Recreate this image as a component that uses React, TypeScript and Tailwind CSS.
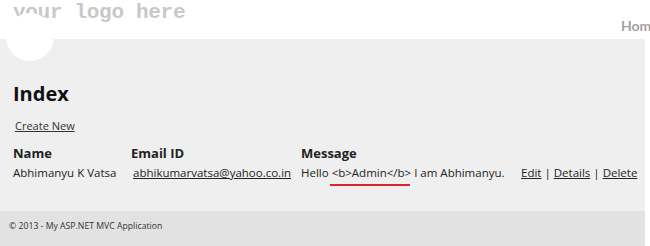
import React from 'react';

const rows = [
  {
    name: 'Abhimanyu K Vatsa',
    email: 'abhikumarvatsa@yahoo.co.in',
    message: 'Hello <b>Admin</b> I am Abhimanyu.',
  },
];

const App = () => {
  return (
    <div className="w-[650px] h-[246px] bg-white overflow-hidden relative font-['Open_Sans',sans-serif]">
      {/* Header */}
      <header className="h-[39px] flex items-start">
        <div className="pl-[13px] pt-[1px] text-[21px] leading-[24px] font-bold text-[#c8c8c8] font-['Liberation_Mono',monospace] tracking-[-0.3px] whitespace-nowrap">
          your logo here
        </div>
        <nav className="ml-auto shrink-0 w-[29px] pt-[17px] text-[14px] leading-[18px] font-bold text-[#a2a2a2] whitespace-nowrap font-['Lato',sans-serif]">
          Home
        </nav>
      </header>

      {/* Logo circle */}
      <div className="absolute left-[6px] top-[13px] w-[48px] h-[48px] rounded-full bg-white z-10" />

      {/* Body */}
      <main className="w-[645px] bg-[#efefef] h-[172px] pl-[13px] pt-[45px]">
        <h2 className="text-[20px] leading-[20px] font-bold text-[#111]">Index</h2>
        <p className="mt-[15px] ml-[2px] text-[11px] leading-[14px]">
          <a className="underline text-[#333]">Create New</a>
        </p>
        <div className="mt-[12px] grid grid-cols-[118px_170px_220px_auto] gap-y-[2px] text-[11.5px] text-[#222]">
          <div className="font-bold text-[13px] leading-[16px]">Name</div>
          <div className="font-bold text-[13px] leading-[16px]">Email ID</div>
          <div className="font-bold text-[13px] leading-[16px]">Message</div>
          <div />
          {rows.map((r) => (
            <React.Fragment key={r.email}>
              <div className="leading-[20px]">{r.name}</div>
              <div className="leading-[20px] pl-[2px]">
                <a className="underline">{r.email}</a>
              </div>
              <div className="leading-[20px] relative whitespace-nowrap">
                {r.message}
                <span className="absolute left-[29px] top-[21px] w-[80px] h-[2px] bg-[#d8262f]" />
              </div>
              <div className="leading-[20px] whitespace-nowrap">
                <a className="underline">Edit</a> | <a className="underline">Details</a> |{' '}
                <a className="underline">Delete</a>
              </div>
            </React.Fragment>
          ))}
        </div>
      </main>

      {/* Footer */}
      <footer className="w-[645px] h-[35px] bg-[#e2e2e2] pl-[9px] pt-[9px] text-[8.7px] leading-[12px] text-[#333]">
        © 2013 - My ASP.NET MVC Application
      </footer>
    </div>
  );
};

export default App;
